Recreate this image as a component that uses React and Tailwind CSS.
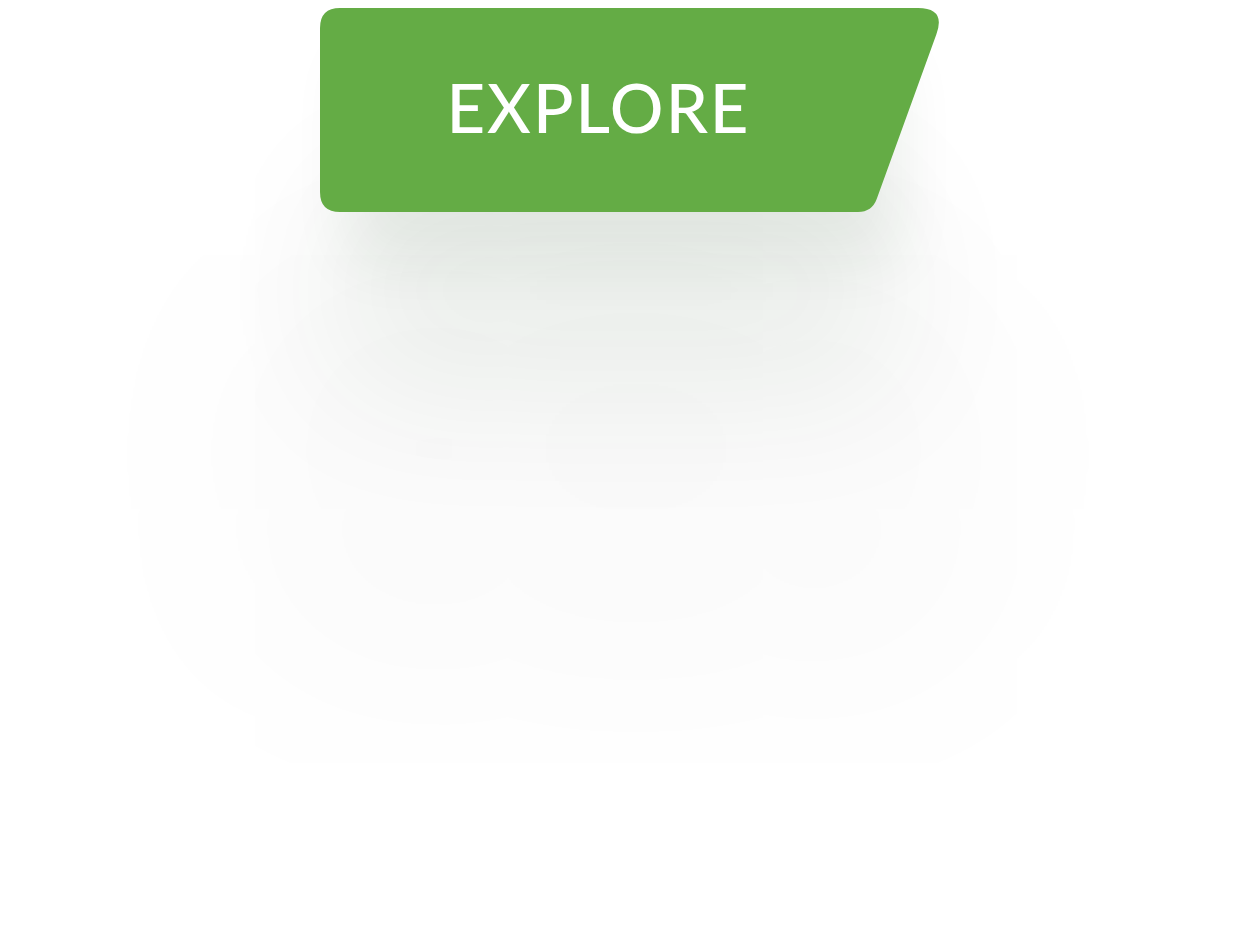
import React from "react";

const ExploreShape = () => (
  <svg
    className="absolute inset-0"
    width="626"
    height="204"
    viewBox="0 0 626 204"
    aria-hidden="true"
  >
    <path
      d="M20 0 H598 Q626 0 616.4 26.3 L556.8 190.8 Q552 204 538 204 H20 Q0 204 0 184 V20 Q0 0 20 0 Z"
      fill="#64ac45"
    />
  </svg>
);

const App = () => {
  return (
    <div className="min-h-screen bg-white pt-2 pl-[320px] overflow-hidden">
      {/* Explore button */}
      <a href="#" className="relative block w-[626px] h-[204px]">
        {/* soft shadow under the button */}
        <div className="absolute left-0 top-0 w-[548px] h-[204px] rounded-[20px] shadow-[30px_50px_60px_rgba(20,60,20,0.08),20px_180px_150px_rgba(20,60,20,0.07),20px_360px_240px_110px_rgba(20,40,20,0.022)]" />
        <ExploreShape />
        <div className="relative w-[557px] h-full flex items-center justify-center">
          <span className="text-white text-[67px] font-medium leading-none tracking-[2px] font-['Lato','Liberation_Sans',sans-serif] mt-[-6px]">
            EXPLORE
          </span>
        </div>
      </a>
    </div>
  );
};

export default App;
